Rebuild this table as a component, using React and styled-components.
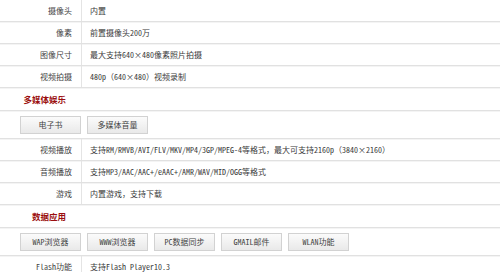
import React from "react"
import styled, { createGlobalStyle } from "styled-components"

const GlobalStyle = createGlobalStyle`
  html, body {
    margin: 0;
    padding: 0;
    background: #fff;
  }
  body {
    font-family: "Noto Sans Mono CJK SC", "Noto Sans CJK SC", sans-serif;
    font-size: 8px;
    color: #3a3a3a;
    overflow: hidden;
  }
`

const sections = [
  {
    rows: [
      { label: "摄像头", value: "内置" },
      { label: "像素", value: "前置摄像头200万" },
      { label: "图像尺寸", value: "最大支持640×480像素照片拍摄" },
      { label: "视频拍摄", value: "480p（640×480）视频录制" },
    ],
  },
  {
    title: "多媒体娱乐",
    buttons: ["电子书", "多媒体音量"],
    rows: [
      {
        label: "视频播放",
        value: "支持RM/RMVB/AVI/FLV/MKV/MP4/3GP/MPEG-4等格式，最大可支持2160p（3840×2160）",
      },
      { label: "音频播放", value: "支持MP3/AAC/AAC+/eAAC+/AMR/WAV/MID/OGG等格式" },
      { label: "游戏", value: "内置游戏，支持下载" },
    ],
  },
  {
    title: "数据应用",
    buttons: ["WAP浏览器", "WWW浏览器", "PC数据同步", "GMAIL邮件", "WLAN功能"],
    rows: [{ label: "Flash功能", value: "支持Flash Player10.3" }],
  },
]

const Specs = () => {
  return (
    <Table>
      {sections.map((section, index) => (
        <React.Fragment key={index}>
          {section.title && (
            <HeadingRow>
              <Heading>{section.title}</Heading>
            </HeadingRow>
          )}
          {section.buttons && (
            <ButtonRow>
              {section.buttons.map((b) => (
                <Button key={b}>{b}</Button>
              ))}
            </ButtonRow>
          )}
          {section.rows.map((row) => (
            <Row key={row.label}>
              <Label>{row.label}</Label>
              <Value>{row.value}</Value>
            </Row>
          ))}
        </React.Fragment>
      ))}
    </Table>
  )
}

const App = () => (
  <>
    <GlobalStyle />
    <Specs />
  </>
)

const Table = styled.div`
  width: 500px;
`

const Line = styled.div`
  display: flex;
  align-items: center;
  border-bottom: 1px solid #e1e1e1;
  box-shadow: 0 1px 0 #f4f4f4;
`

const Row = styled(Line)`
  height: 21px;
  align-items: stretch;
`

const Label = styled.div`
  width: 72px;
  padding-right: 9px;
  border-right: 1px solid #e4e4e4;
  display: flex;
  align-items: center;
  justify-content: flex-end;
  color: #444;
`

const Value = styled.div`
  display: flex;
  align-items: center;
  padding-left: 8px;
  white-space: nowrap;
  color: #3a3a3a;
`

const HeadingRow = styled(Line)`
  height: 22px;
`

const Heading = styled.div`
  width: 66px;
  text-align: right;
  font-size: 8.5px;
  font-weight: 700;
  color: #9b0f0f;
`

const ButtonRow = styled(Line)`
  height: 27px;
  padding-left: 20px;
  gap: 6px;
`

const Button = styled.div`
  width: 59px;
  height: 16px;
  display: flex;
  align-items: center;
  justify-content: center;
  border: 1px solid #d2d2d2;
  background: linear-gradient(#fbfbfb, #e9e9e9);
  color: #444;
  white-space: nowrap;
`

export default App
